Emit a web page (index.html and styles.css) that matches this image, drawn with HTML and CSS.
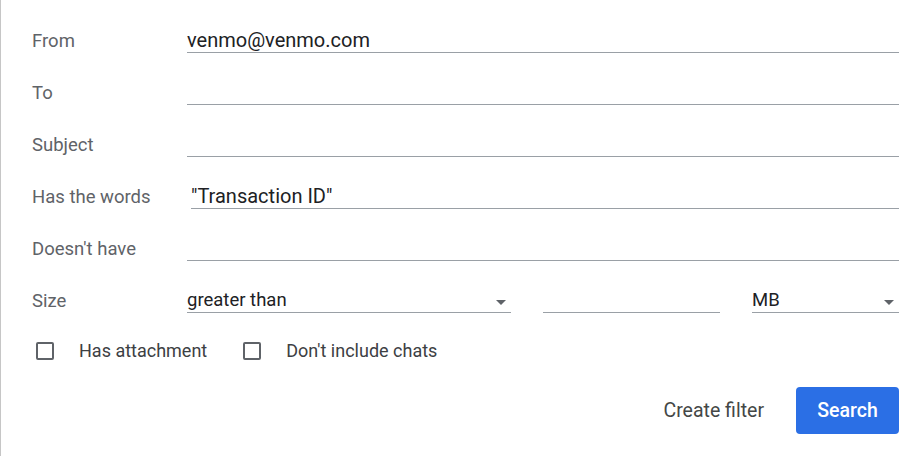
FILE: index.html
```html
<!DOCTYPE html>
<html>
<head>
<meta charset="utf-8">
<link rel="stylesheet" href="styles.css">
</head>
<body>
<div class="panel">
  <div class="row">
    <div class="label">From</div>
    <div class="field">venmo@venmo.com</div>
  </div>
  <div class="row">
    <div class="label">To</div>
    <div class="field"></div>
  </div>
  <div class="row">
    <div class="label">Subject</div>
    <div class="field"></div>
  </div>
  <div class="row">
    <div class="label">Has the words</div>
    <div class="field field-indent">"Transaction ID"</div>
  </div>
  <div class="row">
    <div class="label">Doesn't have</div>
    <div class="field"></div>
  </div>
  <div class="row">
    <div class="label">Size</div>
    <div class="size-group">
      <div class="field select select-op">greater than<span class="arrow"></span></div>
      <div class="field size-num"></div>
      <div class="field select select-unit">MB<span class="arrow"></span></div>
    </div>
  </div>
  <div class="checks">
    <label class="check"><span class="box"></span><span class="check-text">Has attachment</span></label>
    <label class="check"><span class="box"></span><span class="check-text">Don't include chats</span></label>
  </div>
  <div class="actions">
    <button class="btn btn-text">Create filter</button>
    <button class="btn btn-primary">Search</button>
  </div>
</div>
</body>
</html>
```

FILE: styles.css
```css
html, body {
  margin: 0;
  padding: 0;
  background: #ffffff;
}

body {
  font-family: Roboto, "Liberation Sans", Arial, sans-serif;
  font-size: 18.5px;
  width: 924px;
  height: 456px;
  overflow: hidden;
}

.panel {
  box-sizing: border-box;
  height: 456px;
  border-left: 1px solid #c6c6c6;
  padding: 1px 25px 0 31px;
  display: flex;
  flex-direction: column;
}

.row {
  display: flex;
  align-items: flex-end;
  height: 52px;
}

.label {
  width: 155px;
  flex: none;
  color: #5f6368;
  line-height: 20px;
  padding-bottom: 2px;
  white-space: nowrap;
}

.field {
  flex: 1;
  height: 20px;
  line-height: 20px;
  padding-bottom: 2px;
  font-size: 20px;
  color: #202124;
  border-bottom: 1px solid #9aa0a6;
  white-space: nowrap;
}

.field-indent {
  margin-left: 4px;
}

.size-group {
  flex: 1;
  display: flex;
  align-items: flex-end;
  gap: 32px;
}

.select {
  position: relative;
  font-size: 18.5px;
}

.select-op {
  flex: none;
  width: 324px;
}

.size-num {
  flex: none;
  width: 177px;
}

.select-unit {
  flex: 1;
}

.arrow {
  position: absolute;
  right: 5px;
  top: 10px;
  width: 0;
  height: 0;
  border-left: 5px solid transparent;
  border-right: 5px solid transparent;
  border-top: 5px solid #5f6368;
}

.checks {
  display: flex;
  align-items: center;
  height: 40px;
  margin-top: 18px;
  gap: 32px;
  font-size: 18px;
}

.check {
  display: flex;
  align-items: center;
  color: #3c4043;
  line-height: 20px;
}

.box {
  box-sizing: border-box;
  width: 18px;
  height: 18px;
  border: 2px solid #5f6368;
  border-radius: 2px;
  margin-left: 4px;
  margin-right: 25px;
}

.actions {
  display: flex;
  justify-content: flex-end;
  align-items: center;
  margin-top: 16px;
  gap: 8px;
}

.btn {
  font-family: Roboto, "Liberation Sans", Arial, sans-serif;
  font-size: 19.5px;
  border: none;
  border-radius: 4px;
  height: 47px;
  cursor: pointer;
}

.btn-text {
  background: transparent;
  color: #444746;
  padding: 0 24px;
}

.btn-primary {
  background: #2b6fe5;
  color: #ffffff;
  font-weight: 500;
  width: 103px;
  padding: 0;
}
```
